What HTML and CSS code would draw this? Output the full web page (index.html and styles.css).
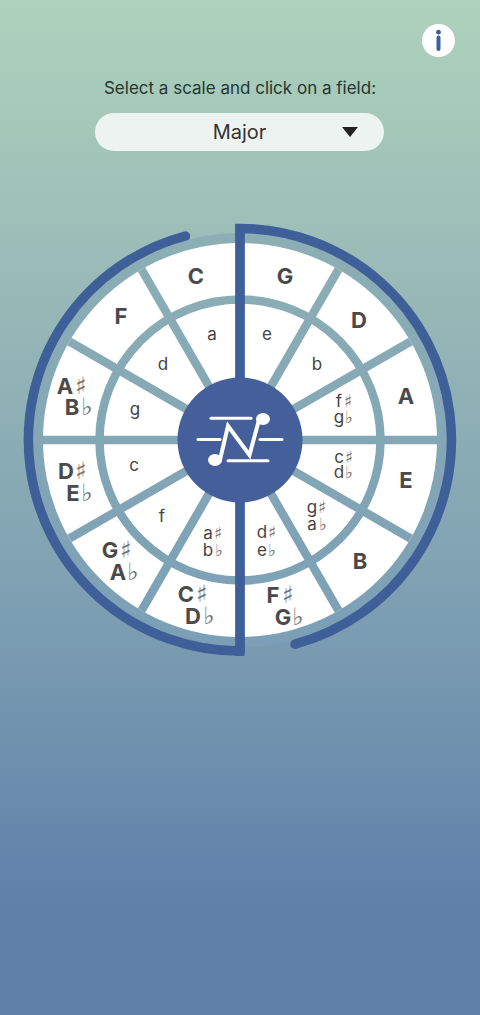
FILE: index.html
```html
<!DOCTYPE html>
<html lang="en">
<head>
  <meta charset="UTF-8" />
  <meta name="viewport" content="width=device-width, initial-scale=1" />
  <title>Circle of Fifths</title>
  <link rel="stylesheet" href="styles.css">
</head>
<body>
  <div class="top-bar">
    <button class="info-btn" aria-label="Info">
      <svg width="33" height="33" viewBox="0 0 33 33">
        <circle cx="16.5" cy="8.2" r="2.4" fill="#3f5f97" />
        <line x1="16.5" y1="13.5" x2="16.5" y2="25" stroke="#3f5f97" stroke-width="4" stroke-linecap="round" />
      </svg>
    </button>
  </div>

  <p class="hint">Select a scale and click on a field:</p>

  <div class="scale-select">
    <span>Major</span>
    <i class="arrow"></i>
  </div>

  <svg class="wheel" width="480" height="450" viewBox="0 215 480 450">
    <defs>
      <linearGradient id="ring" gradientUnits="userSpaceOnUse" x1="0" y1="233" x2="0" y2="647">
        <stop offset="0" stop-color="#8cafb5" />
        <stop offset="1" stop-color="#7b9fb6" />
      </linearGradient>
    </defs>

    <circle cx="240" cy="440" r="207" fill="url(#ring)" />
    <circle cx="240" cy="440" r="197" fill="#fff" />
    <circle cx="240" cy="440" r="140.5" fill="none" stroke="url(#ring)" stroke-width="8.5" />

    <g stroke="url(#ring)" stroke-width="8.5">
      <line x1="43" y1="440" x2="437" y2="440" />
      <line x1="141.5" y1="269.4" x2="338.5" y2="610.6" />
      <line x1="69.4" y1="341.5" x2="410.6" y2="538.5" />
      <line x1="69.4" y1="538.5" x2="410.6" y2="341.5" />
      <line x1="141.5" y1="610.6" x2="338.5" y2="269.4" />
    </g>

    <g fill="none" stroke="#3f5f99" stroke-width="9.5">
      <path d="M240 651.5V228.5A211.5 211.5 0 0 1 295 644.2" stroke-linecap="round" />
      <path d="M240 651A211 211 0 0 1 185.5 236" stroke-linecap="round" />
    </g>
    <rect x="235.5" y="224" width="9" height="432" fill="#3f5f99" />

    <circle cx="240" cy="440" r="62.5" fill="#445f99" />
    <g fill="#fff">
      <ellipse cx="263" cy="419" rx="7" ry="6" />
      <ellipse cx="215" cy="460" rx="7" ry="6" />
    </g>
    <g fill="none" stroke="#fff">
      <polyline points="219.5,462 228,426 249.5,455 259.5,418" stroke-width="4" />
      <g stroke-width="3" stroke-linecap="round">
        <line x1="211" y1="418.3" x2="251" y2="418.3" />
        <line x1="198" y1="439.5" x2="220" y2="439.5" />
        <line x1="260" y1="439.5" x2="282" y2="439.5" />
        <line x1="228" y1="460.7" x2="268" y2="460.7" />
      </g>
    </g>

    <g class="major">
      <text x="196" y="284">C</text>
      <text x="285" y="284">G</text>
      <text x="359" y="328">D</text>
      <text x="406" y="404">A</text>
      <text x="406" y="488">E</text>
      <text x="360" y="569">B</text>
      <text x="121" y="324">F</text>
      <text y="394"><tspan x="65">A</tspan><tspan class="acc" x="81">♯</tspan></text>
      <text y="415"><tspan x="72">B</tspan><tspan class="acc" x="87">♭</tspan></text>
      <text y="479"><tspan x="66">D</tspan><tspan class="acc" x="81">♯</tspan></text>
      <text y="501"><tspan x="73">E</tspan><tspan class="acc" x="87">♭</tspan></text>
      <text y="558"><tspan x="110">G</tspan><tspan class="acc" x="126">♯</tspan></text>
      <text y="580"><tspan x="118">A</tspan><tspan class="acc" x="133">♭</tspan></text>
      <text y="602"><tspan x="186">C</tspan><tspan class="acc" x="202">♯</tspan></text>
      <text y="624"><tspan x="193">D</tspan><tspan class="acc" x="209">♭</tspan></text>
      <text y="603"><tspan x="273">F</tspan><tspan class="acc" x="288">♯</tspan></text>
      <text y="625"><tspan x="283">G</tspan><tspan class="acc" x="298">♭</tspan></text>
    </g>

    <g class="minor">
      <text x="212" y="340">a</text>
      <text x="267" y="340">e</text>
      <text x="163" y="370">d</text>
      <text x="317" y="370">b</text>
      <text x="135" y="415">g</text>
      <text x="134" y="471">c</text>
      <text x="162" y="522">f</text>
    </g>

    <g class="minor small">
      <text y="407"><tspan x="339">f</tspan><tspan class="acc" x="348">♯</tspan></text>
      <text y="423"><tspan x="339">g</tspan><tspan class="acc" x="349">♭</tspan></text>
      <text y="463"><tspan x="339">c</tspan><tspan class="acc" x="349">♯</tspan></text>
      <text y="478"><tspan x="339">d</tspan><tspan class="acc" x="349">♭</tspan></text>
      <text y="513"><tspan x="312">g</tspan><tspan class="acc" x="322">♯</tspan></text>
      <text y="530"><tspan x="312">a</tspan><tspan class="acc" x="323">♭</tspan></text>
      <text y="538"><tspan x="262">d</tspan><tspan class="acc" x="272">♯</tspan></text>
      <text y="556"><tspan x="262">e</tspan><tspan class="acc" x="272">♭</tspan></text>
      <text y="539"><tspan x="208">a</tspan><tspan class="acc" x="218">♯</tspan></text>
      <text y="556"><tspan x="208">b</tspan><tspan class="acc" x="219">♭</tspan></text>
    </g>
  </svg>
</body>
</html>
```

FILE: styles.css
```css
body {
  margin: 0;
  min-height: 1015px;
  font-family: Inter, "Open Sans", sans-serif;
  background: linear-gradient(180deg, #aed2bc 0%, #7d9fb2 60%, #5f7fa9 90%, #5f7fa9 100%);
  overflow: hidden;
}

.top-bar {
  display: flex;
  justify-content: flex-end;
  padding: 24px 25px 0 0;
}

.info-btn {
  width: 33px;
  height: 33px;
  padding: 0;
  border: none;
  border-radius: 50%;
  background: #fff;
}
.info-btn svg { display: block; }

.hint {
  margin: 21px 0 0;
  text-align: center;
  font-size: 17px;
  line-height: 20px;
  color: #26352f;
}

.scale-select {
  position: relative;
  display: flex;
  align-items: center;
  justify-content: center;
  width: 289px;
  height: 38px;
  margin: 15px 0 0 95px;
  border-radius: 19px;
  background: #edf3f1;
  font-size: 20px;
  color: #333;
}

.arrow {
  position: absolute;
  right: 26px;
  top: 14px;
  border-left: 8px solid transparent;
  border-right: 8px solid transparent;
  border-top: 10px solid #222;
}

.wheel {
  display: block;
  margin-top: 64px;
}

.wheel text { text-anchor: middle; }

.major {
  font-size: 22px;
  font-weight: 700;
  fill: #4a4a4a;
}

.minor {
  font-size: 17px;
  font-weight: 400;
  fill: #444;
}

.acc {
  font-family: "DejaVu Sans", sans-serif;
  font-weight: 400;
  fill: #707070;
}
.major .acc { font-size: 24px; }
.minor .acc { font-size: 17px; }
```
